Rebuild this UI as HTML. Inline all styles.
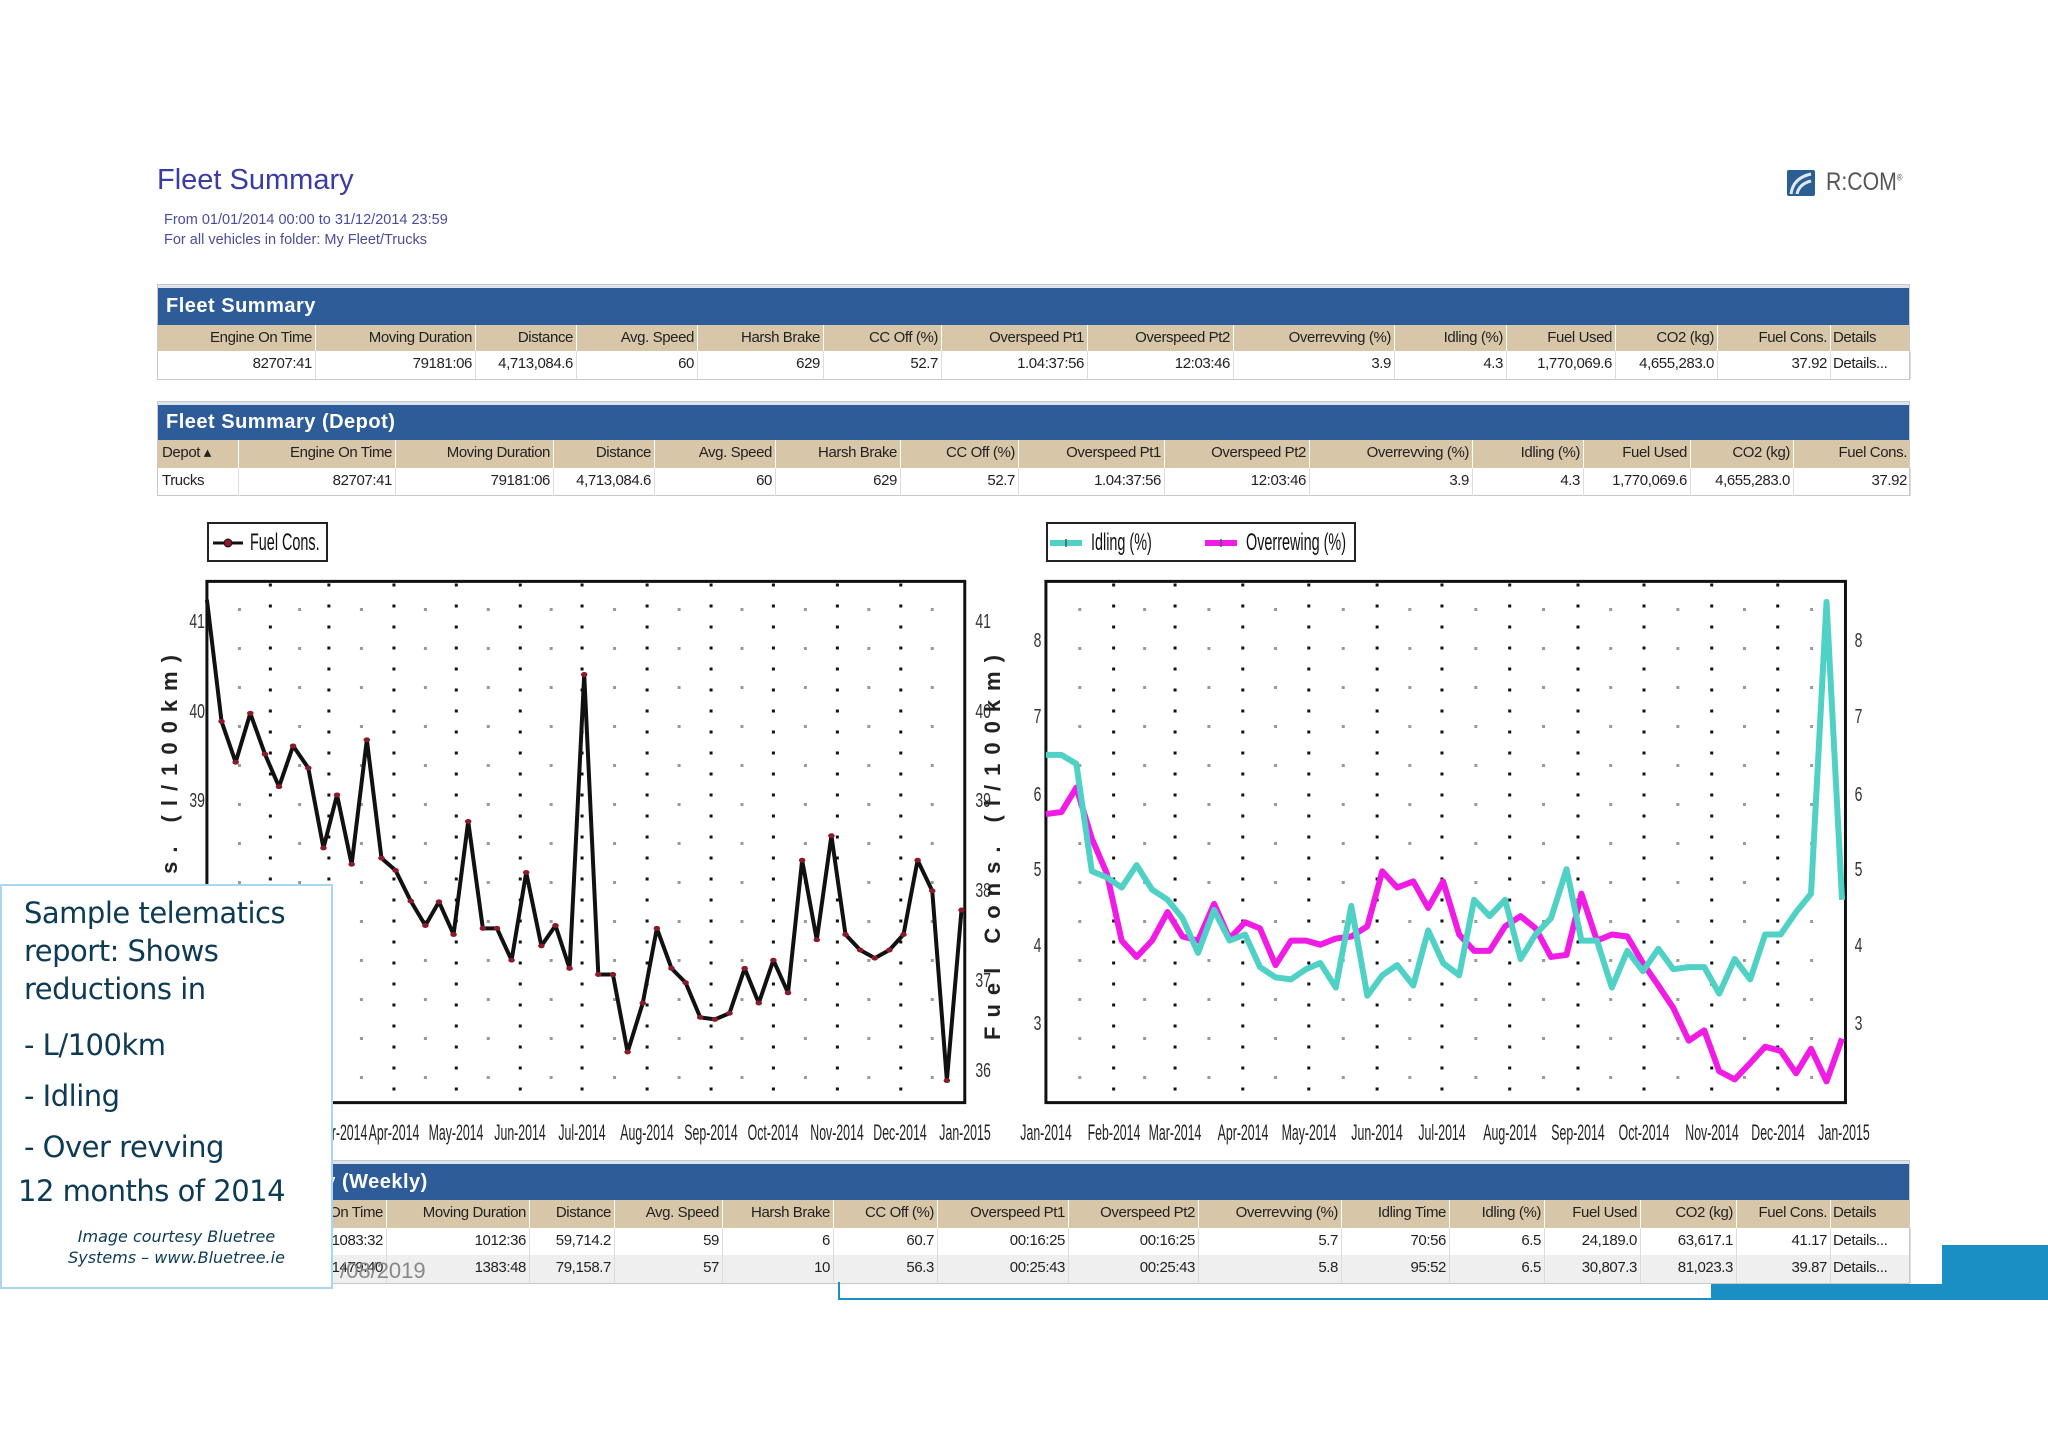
<!DOCTYPE html>
<html><head><meta charset="utf-8"><style>
*{margin:0;padding:0;box-sizing:border-box}
body{width:2048px;height:1448px;background:#fff;position:relative;overflow:hidden;font-family:"Liberation Sans",sans-serif}
.a{position:absolute}
.tbl{position:absolute;border:1px solid #c8c8c8;background:#fff}
.bar{position:absolute;left:0;right:0;background:#2d5c99;color:#fff;font-weight:bold;font-size:20px;letter-spacing:0.5px;padding-left:8px;display:flex;align-items:center;border-top:3px solid #dde4ee}
.row{position:absolute;left:0;right:0}
.c{position:absolute;top:0;bottom:0;font-size:15px;color:#222;text-align:right;padding-right:3px;line-height:26px;white-space:nowrap;overflow:hidden;letter-spacing:-0.4px}
.hd{background:#d8c6a9}
.hd .c{border-right:1px solid #fff}
.dt .c{border-right:1px solid #ddd}
.xl{position:absolute;font-size:22px;color:#222;transform:translateX(-50%) scaleX(0.56);white-space:nowrap;top:1120px}
.yl{position:absolute;font-size:20px;color:#333;transform:scaleX(0.7)}
.rt{position:absolute;transform:rotate(-90deg);transform-origin:left top;font-size:22px;font-weight:bold;letter-spacing:9px;color:#222;white-space:nowrap}
</style></head><body>

<div class="a" style="left:157px;top:164px;font-size:29px;color:#3b3ca3">Fleet Summary</div>
<div class="a" style="left:164px;top:210px;font-size:14.5px;color:#4a4c9c;line-height:20px">From 01/01/2014 00:00 to 31/12/2014 23:59<br>For all vehicles in folder: My Fleet/Trucks</div>

<svg class="a" style="left:1787px;top:170px" width="28" height="26" viewBox="0 0 28 26"><rect x="0" y="0" width="28" height="26" rx="2" fill="#2b5f94"/><path d="M4 24 Q6 8 24 4" stroke="#dfe8f0" stroke-width="3" fill="none"/><path d="M10 24 Q12 14 24 11" stroke="#dfe8f0" stroke-width="3" fill="none"/></svg>
<div class="a" style="left:1826px;top:168px;font-size:25px;color:#555;transform:scaleX(0.85);transform-origin:left">R:COM<sup style="font-size:9px">®</sup></div>

<!-- Fleet Summary table -->
<div class="tbl" style="left:157px;top:284px;width:1753px;height:96px">
 <div class="bar" style="top:0;height:40px">Fleet Summary</div>
 <div class="row hd" style="top:40px;height:26px">
  <div class="c" style="left:0;width:158px">Engine On Time</div><div class="c" style="left:158px;width:160px">Moving Duration</div><div class="c" style="left:318px;width:101px">Distance</div><div class="c" style="left:419px;width:121px">Avg. Speed</div><div class="c" style="left:540px;width:126px">Harsh Brake</div><div class="c" style="left:666px;width:118px">CC Off (%)</div><div class="c" style="left:784px;width:146px">Overspeed Pt1</div><div class="c" style="left:930px;width:146px">Overspeed Pt2</div><div class="c" style="left:1076px;width:161px">Overrevving (%)</div><div class="c" style="left:1237px;width:112px">Idling (%)</div><div class="c" style="left:1349px;width:109px">Fuel Used</div><div class="c" style="left:1458px;width:102px">CO2 (kg)</div><div class="c" style="left:1560px;width:113px">Fuel Cons.</div><div class="c" style="left:1673px;width:80px;text-align:left;padding-left:2px">Details</div>
 </div>
 <div class="row dt" style="top:66px;height:28px">
  <div class="c" style="left:0;width:158px">82707:41</div><div class="c" style="left:158px;width:160px">79181:06</div><div class="c" style="left:318px;width:101px">4,713,084.6</div><div class="c" style="left:419px;width:121px">60</div><div class="c" style="left:540px;width:126px">629</div><div class="c" style="left:666px;width:118px">52.7</div><div class="c" style="left:784px;width:146px">1.04:37:56</div><div class="c" style="left:930px;width:146px">12:03:46</div><div class="c" style="left:1076px;width:161px">3.9</div><div class="c" style="left:1237px;width:112px">4.3</div><div class="c" style="left:1349px;width:109px">1,770,069.6</div><div class="c" style="left:1458px;width:102px">4,655,283.0</div><div class="c" style="left:1560px;width:113px">37.92</div><div class="c" style="left:1673px;width:80px;text-align:left;padding-left:2px">Details...</div>
 </div>
</div>

<!-- Depot table -->
<div class="tbl" style="left:157px;top:401px;width:1753px;height:95px">
 <div class="bar" style="top:0;height:38px">Fleet Summary (Depot)</div>
 <div class="row hd" style="top:38px;height:28px">
  <div class="c" style="left:0;width:81px;text-align:left;padding-left:4px">Depot ▴</div><div class="c" style="left:81px;width:157px">Engine On Time</div><div class="c" style="left:238px;width:158px">Moving Duration</div><div class="c" style="left:396px;width:101px">Distance</div><div class="c" style="left:497px;width:121px">Avg. Speed</div><div class="c" style="left:618px;width:125px">Harsh Brake</div><div class="c" style="left:743px;width:118px">CC Off (%)</div><div class="c" style="left:861px;width:146px">Overspeed Pt1</div><div class="c" style="left:1007px;width:145px">Overspeed Pt2</div><div class="c" style="left:1152px;width:163px">Overrevving (%)</div><div class="c" style="left:1315px;width:111px">Idling (%)</div><div class="c" style="left:1426px;width:107px">Fuel Used</div><div class="c" style="left:1533px;width:103px">CO2 (kg)</div><div class="c" style="left:1636px;width:117px">Fuel Cons.</div>
 </div>
 <div class="row dt" style="top:66px;height:28px">
  <div class="c" style="left:0;width:81px;text-align:left;padding-left:4px">Trucks</div><div class="c" style="left:81px;width:157px">82707:41</div><div class="c" style="left:238px;width:158px">79181:06</div><div class="c" style="left:396px;width:101px">4,713,084.6</div><div class="c" style="left:497px;width:121px">60</div><div class="c" style="left:618px;width:125px">629</div><div class="c" style="left:743px;width:118px">52.7</div><div class="c" style="left:861px;width:146px">1.04:37:56</div><div class="c" style="left:1007px;width:145px">12:03:46</div><div class="c" style="left:1152px;width:163px">3.9</div><div class="c" style="left:1315px;width:111px">4.3</div><div class="c" style="left:1426px;width:107px">1,770,069.6</div><div class="c" style="left:1533px;width:103px">4,655,283.0</div><div class="c" style="left:1636px;width:117px">37.92</div>
 </div>
</div>

<!-- Weekly table -->
<div class="tbl" style="left:157px;top:1160px;width:1753px;height:124px">
 <div class="bar" style="top:0;height:39px;padding-left:28px">Fleet Summary (Weekly)</div>
 <div class="row hd" style="top:39px;height:28px">
  <div class="c" style="left:0;width:229px">Engine On Time</div><div class="c" style="left:229px;width:143px">Moving Duration</div><div class="c" style="left:372px;width:85px">Distance</div><div class="c" style="left:457px;width:108px">Avg. Speed</div><div class="c" style="left:565px;width:111px">Harsh Brake</div><div class="c" style="left:676px;width:104px">CC Off (%)</div><div class="c" style="left:780px;width:131px">Overspeed Pt1</div><div class="c" style="left:911px;width:130px">Overspeed Pt2</div><div class="c" style="left:1041px;width:143px">Overrevving (%)</div><div class="c" style="left:1184px;width:108px">Idling Time</div><div class="c" style="left:1292px;width:95px">Idling (%)</div><div class="c" style="left:1387px;width:96px">Fuel Used</div><div class="c" style="left:1483px;width:96px">CO2 (kg)</div><div class="c" style="left:1579px;width:94px">Fuel Cons.</div><div class="c" style="left:1673px;width:80px;text-align:left;padding-left:2px">Details</div>
 </div>
 <div class="row dt" style="top:67px;height:27px">
  <div class="c" style="left:0;width:229px">1083:32</div><div class="c" style="left:229px;width:143px">1012:36</div><div class="c" style="left:372px;width:85px">59,714.2</div><div class="c" style="left:457px;width:108px">59</div><div class="c" style="left:565px;width:111px">6</div><div class="c" style="left:676px;width:104px">60.7</div><div class="c" style="left:780px;width:131px">00:16:25</div><div class="c" style="left:911px;width:130px">00:16:25</div><div class="c" style="left:1041px;width:143px">5.7</div><div class="c" style="left:1184px;width:108px">70:56</div><div class="c" style="left:1292px;width:95px">6.5</div><div class="c" style="left:1387px;width:96px">24,189.0</div><div class="c" style="left:1483px;width:96px">63,617.1</div><div class="c" style="left:1579px;width:94px">41.17</div><div class="c" style="left:1673px;width:80px;text-align:left;padding-left:2px">Details...</div>
 </div>
 <div class="row dt" style="top:94px;height:28px;background:#efefef">
  <div class="c" style="left:0;width:229px">1479:40</div><div class="c" style="left:229px;width:143px">1383:48</div><div class="c" style="left:372px;width:85px">79,158.7</div><div class="c" style="left:457px;width:108px">57</div><div class="c" style="left:565px;width:111px">10</div><div class="c" style="left:676px;width:104px">56.3</div><div class="c" style="left:780px;width:131px">00:25:43</div><div class="c" style="left:911px;width:130px">00:25:43</div><div class="c" style="left:1041px;width:143px">5.8</div><div class="c" style="left:1184px;width:108px">95:52</div><div class="c" style="left:1292px;width:95px">6.5</div><div class="c" style="left:1387px;width:96px">30,807.3</div><div class="c" style="left:1483px;width:96px">81,023.3</div><div class="c" style="left:1579px;width:94px">39.87</div><div class="c" style="left:1673px;width:80px;text-align:left;padding-left:2px">Details...</div>
 </div>
</div>

<!-- Left chart -->
<div class="a" style="left:207px;top:522px;width:121px;height:40px;border:2px solid #222;background:#fff"></div>
<svg class="a" style="left:213px;top:536px" width="30" height="14"><line x1="0" y1="7" x2="30" y2="7" stroke="#111" stroke-width="3"/><circle cx="15" cy="7" r="4" fill="#8b1a2a" stroke="#111"/></svg>
<div class="a" style="left:250px;top:529px;font-size:24px;color:#111;transform:scaleX(0.6);transform-origin:left">Fuel Cons.</div>

<svg class="a" style="left:150px;top:510px" width="850" height="640" viewBox="0 0 1568 1568" preserveAspectRatio="none">
<g stroke="#111" stroke-width="3" stroke-dasharray="3 18">
<path vector-effect="non-scaling-stroke" d="M222 180V1450M330 180V1450M450 180V1450M565 180V1450M683 180V1450M797 180V1450M917 180V1450M1035 180V1450M1150 180V1450M1268 180V1450M1385 180V1450"/></g>
<g stroke="#999" stroke-width="3" stroke-dasharray="3 36">
<path vector-effect="non-scaling-stroke" d="M165 240V1450M276 240V1450M390 240V1450M508 240V1450M624 240V1450M740 240V1450M857 240V1450M976 240V1450M1092 240V1450M1209 240V1450M1326 240V1450M1443 240V1450"/></g>
<rect x="105" y="175" width="1398" height="1277" fill="none" stroke="#111" stroke-width="3" vector-effect="non-scaling-stroke"/>
<polyline vector-effect="non-scaling-stroke" fill="none" stroke="#111" stroke-width="4" stroke-linejoin="round" points="105,220 132,518 158,618 185,498 212,598 238,678 264,578 292,632 320,828 345,698 372,868 400,563 427,853 453,883 481,958 508,1018 533,960 560,1040 587,763 614,1025 640,1025 667,1103 694,888 722,1068 748,1018 774,1123 801,403 827,1138 854,1138 881,1328 909,1208 935,1025 962,1123 988,1158 1015,1243 1042,1248 1069,1233 1097,1123 1123,1208 1150,1103 1177,1183 1203,858 1230,1053 1257,798 1283,1040 1310,1078 1337,1098 1364,1078 1390,1040 1416,858 1443,933 1470,1398 1497,980"/>
<g fill="#8b1a2a"><circle cx="132" cy="518" r="6"/><circle cx="158" cy="618" r="6"/><circle cx="185" cy="498" r="6"/><circle cx="212" cy="598" r="6"/><circle cx="238" cy="678" r="6"/><circle cx="264" cy="578" r="6"/><circle cx="292" cy="632" r="6"/><circle cx="320" cy="828" r="6"/><circle cx="345" cy="698" r="6"/><circle cx="372" cy="868" r="6"/><circle cx="400" cy="563" r="6"/><circle cx="427" cy="853" r="6"/><circle cx="453" cy="883" r="6"/><circle cx="481" cy="958" r="6"/><circle cx="508" cy="1018" r="6"/><circle cx="533" cy="960" r="6"/><circle cx="560" cy="1040" r="6"/><circle cx="587" cy="763" r="6"/><circle cx="614" cy="1025" r="6"/><circle cx="640" cy="1025" r="6"/><circle cx="667" cy="1103" r="6"/><circle cx="694" cy="888" r="6"/><circle cx="722" cy="1068" r="6"/><circle cx="748" cy="1018" r="6"/><circle cx="774" cy="1123" r="6"/><circle cx="801" cy="403" r="6"/><circle cx="827" cy="1138" r="6"/><circle cx="854" cy="1138" r="6"/><circle cx="881" cy="1328" r="6"/><circle cx="909" cy="1208" r="6"/><circle cx="935" cy="1025" r="6"/><circle cx="962" cy="1123" r="6"/><circle cx="988" cy="1158" r="6"/><circle cx="1015" cy="1243" r="6"/><circle cx="1042" cy="1248" r="6"/><circle cx="1069" cy="1233" r="6"/><circle cx="1097" cy="1123" r="6"/><circle cx="1123" cy="1208" r="6"/><circle cx="1150" cy="1103" r="6"/><circle cx="1177" cy="1183" r="6"/><circle cx="1203" cy="858" r="6"/><circle cx="1230" cy="1053" r="6"/><circle cx="1257" cy="798" r="6"/><circle cx="1283" cy="1040" r="6"/><circle cx="1310" cy="1078" r="6"/><circle cx="1337" cy="1098" r="6"/><circle cx="1364" cy="1078" r="6"/><circle cx="1390" cy="1040" r="6"/><circle cx="1416" cy="858" r="6"/><circle cx="1443" cy="933" r="6"/><circle cx="1470" cy="1398" r="6"/><circle cx="1497" cy="980" r="6"/></g>
</svg>
<div class="yl" style="left:186px;top:611px">41</div><div class="yl" style="left:186px;top:701px">40</div><div class="yl" style="left:186px;top:790px">39</div>
<div class="yl" style="left:972px;top:611px">41</div><div class="yl" style="left:972px;top:701px">40</div><div class="yl" style="left:972px;top:790px">39</div><div class="yl" style="left:972px;top:880px">38</div><div class="yl" style="left:972px;top:970px">37</div><div class="yl" style="left:972px;top:1060px">36</div>
<div class="rt" style="left:157px;top:1040px">Fuel Cons. (l/100km)</div>
<div class="rt" style="left:980px;top:1040px">Fuel Cons. (l/100km)</div>

<div class="xl" style="left:341px">Mar-2014</div><div class="xl" style="left:394px">Apr-2014</div><div class="xl" style="left:456px">May-2014</div><div class="xl" style="left:520px">Jun-2014</div><div class="xl" style="left:582px">Jul-2014</div><div class="xl" style="left:647px">Aug-2014</div><div class="xl" style="left:711px">Sep-2014</div><div class="xl" style="left:773px">Oct-2014</div><div class="xl" style="left:837px">Nov-2014</div><div class="xl" style="left:900px">Dec-2014</div><div class="xl" style="left:965px">Jan-2015</div>

<!-- Right chart -->
<div class="a" style="left:1046px;top:522px;width:310px;height:40px;border:2px solid #222;background:#fff"></div>
<svg class="a" style="left:1050px;top:536px" width="240" height="14"><line x1="0" y1="7" x2="32" y2="7" stroke="#4fd1c5" stroke-width="6"/><line x1="16" y1="3" x2="16" y2="11" stroke="#555" stroke-width="1.5"/><line x1="155" y1="7" x2="187" y2="7" stroke="#f01ce6" stroke-width="6"/><line x1="171" y1="3" x2="171" y2="11" stroke="#555" stroke-width="1.5"/></svg>
<div class="a" style="left:1091px;top:529px;font-size:24px;color:#111;transform:scaleX(0.6);transform-origin:left">Idling (%)</div>
<div class="a" style="left:1246px;top:529px;font-size:24px;color:#111;transform:scaleX(0.6);transform-origin:left">Overrewing (%)</div>

<svg class="a" style="left:1000px;top:510px" width="900" height="640" viewBox="0 0 1568 1568" preserveAspectRatio="none">
<g stroke="#111" stroke-width="3" stroke-dasharray="3 18"><path vector-effect="non-scaling-stroke" d="M198 180V1450M305 180V1450M423 180V1450M538 180V1450M657 180V1450M770 180V1450M888 180V1450M1007 180V1450M1122 180V1450M1240 180V1450M1355 180V1450"/></g>
<g stroke="#999" stroke-width="3" stroke-dasharray="3 36"><path vector-effect="non-scaling-stroke" d="M139 240V1450M252 240V1450M364 240V1450M480 240V1450M598 240V1450M714 240V1450M829 240V1450M947 240V1450M1064 240V1450M1181 240V1450M1297 240V1450M1414 240V1450"/></g>
<rect x="80" y="175" width="1393" height="1277" fill="none" stroke="#111" stroke-width="3" vector-effect="non-scaling-stroke"/>
<polyline vector-effect="non-scaling-stroke" fill="none" stroke="#f01ce6" stroke-width="6" stroke-linejoin="round" points="80,745 107,740 133,680 160,805 186,890 212,1055 238,1095 265,1055 292,985 318,1045 345,1055 373,965 400,1050 427,1010 453,1025 480,1115 507,1055 533,1055 558,1065 585,1050 612,1045 640,1020 666,885 692,925 720,910 746,975 772,910 800,1040 826,1080 853,1080 880,1020 907,995 933,1025 960,1095 987,1090 1013,940 1040,1055 1066,1040 1093,1045 1120,1110 1147,1165 1173,1220 1200,1300 1227,1275 1253,1375 1280,1395 1307,1355 1333,1315 1360,1325 1387,1380 1413,1320 1440,1400 1467,1295"/>
<polyline vector-effect="non-scaling-stroke" fill="none" stroke="#4fd1c5" stroke-width="6" stroke-linejoin="round" points="80,600 107,600 133,622 160,885 186,900 212,925 238,870 265,930 292,955 318,1000 345,1085 373,980 400,1055 427,1040 453,1120 480,1145 507,1150 533,1125 558,1110 585,1170 612,970 640,1190 666,1140 692,1115 720,1165 746,1030 772,1110 800,1140 826,955 853,995 880,955 907,1100 933,1040 960,1000 987,880 1013,1055 1040,1055 1066,1170 1093,1080 1120,1130 1147,1075 1173,1125 1200,1120 1227,1120 1253,1185 1280,1100 1307,1150 1333,1040 1360,1040 1387,985 1413,940 1440,225 1467,955"/>
</svg>
<div class="yl" style="left:1032px;top:630px">8</div><div class="yl" style="left:1032px;top:706px">7</div><div class="yl" style="left:1032px;top:784px">6</div><div class="yl" style="left:1032px;top:859px">5</div><div class="yl" style="left:1032px;top:935px">4</div><div class="yl" style="left:1032px;top:1013px">3</div>
<div class="yl" style="left:1853px;top:630px">8</div><div class="yl" style="left:1853px;top:706px">7</div><div class="yl" style="left:1853px;top:784px">6</div><div class="yl" style="left:1853px;top:859px">5</div><div class="yl" style="left:1853px;top:935px">4</div><div class="yl" style="left:1853px;top:1013px">3</div>

<div class="xl" style="left:1046px">Jan-2014</div><div class="xl" style="left:1114px">Feb-2014</div><div class="xl" style="left:1175px">Mar-2014</div><div class="xl" style="left:1243px">Apr-2014</div><div class="xl" style="left:1309px">May-2014</div><div class="xl" style="left:1377px">Jun-2014</div><div class="xl" style="left:1442px">Jul-2014</div><div class="xl" style="left:1510px">Aug-2014</div><div class="xl" style="left:1578px">Sep-2014</div><div class="xl" style="left:1644px">Oct-2014</div><div class="xl" style="left:1712px">Nov-2014</div><div class="xl" style="left:1778px">Dec-2014</div><div class="xl" style="left:1844px">Jan-2015</div>

<!-- overlays -->
<div class="a" style="left:340px;top:1258px;font-size:22px;color:#888">/08/2019</div>
<div class="a" style="left:838px;top:1282px;width:875px;height:18px;border-left:2px solid #1a8fc4;border-bottom:2px solid #1a8fc4"></div>
<div class="a" style="left:1711px;top:1284px;width:337px;height:16px;background:#1a8fc4"></div>
<div class="a" style="left:1942px;top:1245px;width:106px;height:55px;background:#1a8fc4"></div>

<div class="a" style="left:0;top:884px;width:333px;height:405px;background:#fff;border:2px solid #a9d6f0;color:#0d3a55;font-family:'DejaVu Sans','Liberation Sans',sans-serif">
 <div style="position:absolute;left:22px;top:8px;font-size:29px;line-height:38px;letter-spacing:-0.5px">Sample telematics<br>report: Shows<br>reductions in</div>
 <div style="position:absolute;left:22px;top:134px;font-size:29px;line-height:51px;letter-spacing:-0.5px">- L/100km<br>- Idling<br>- Over revving</div>
 <div style="position:absolute;left:16px;top:288px;font-size:29px;letter-spacing:-0.5px">12 months of 2014</div>
 <div style="position:absolute;left:0;width:333px;top:340px;text-align:center;font-size:16px;font-style:italic;line-height:21px;padding-left:16px">Image courtesy Bluetree<br>Systems – www.Bluetree.ie</div>
</div>
</body></html>
